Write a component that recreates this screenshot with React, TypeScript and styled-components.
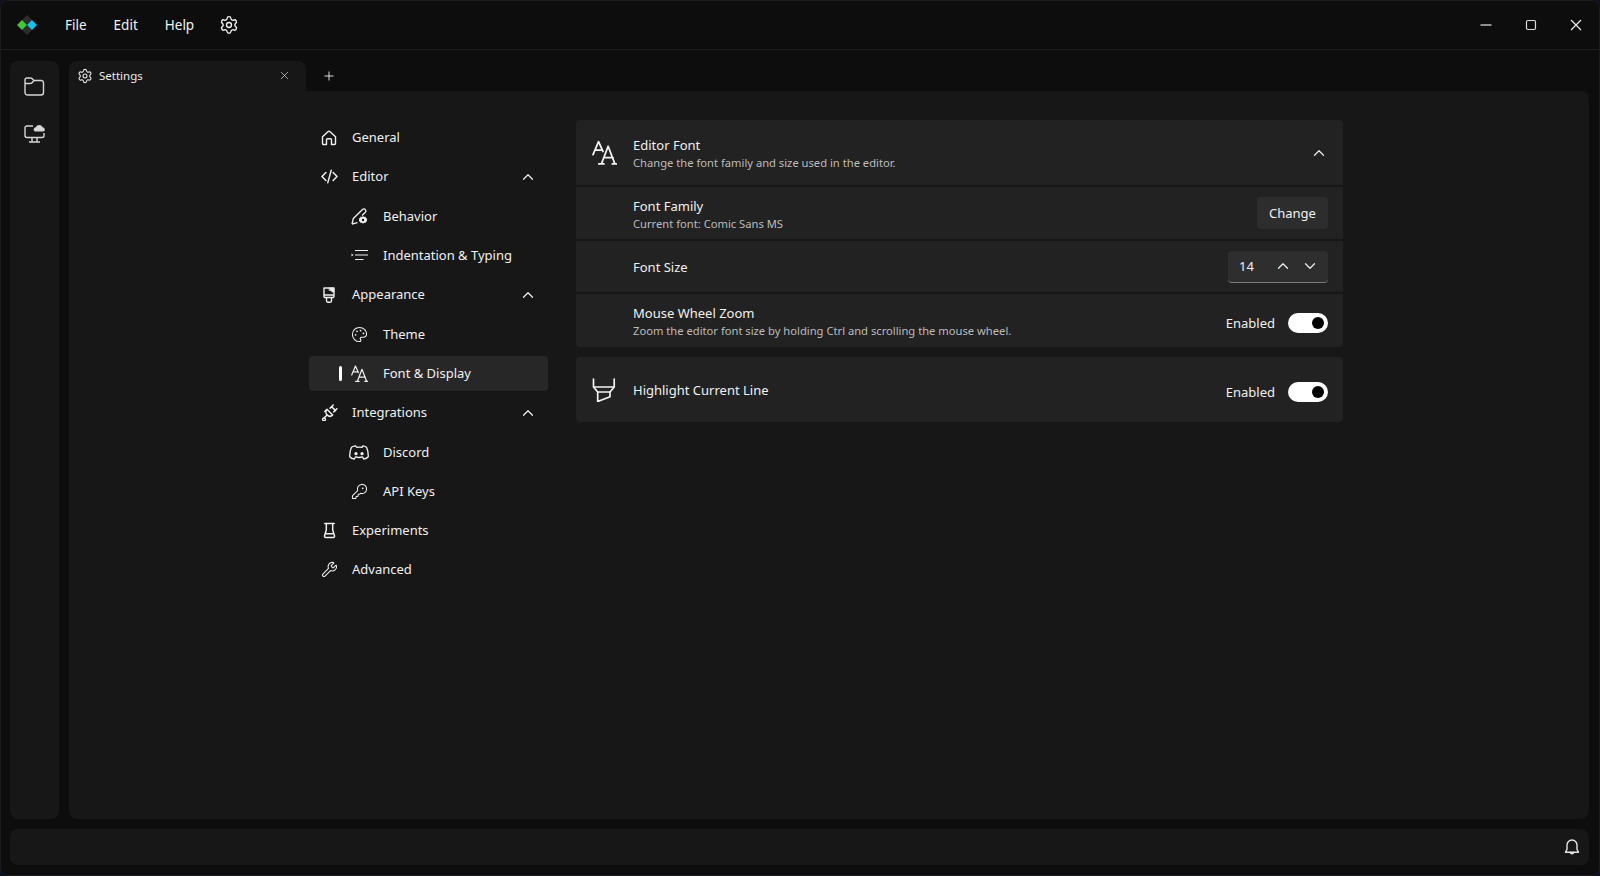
import React from 'react'
import styled, { createGlobalStyle } from 'styled-components'
import { ChevronDown, ChevronUp, KeyRound, Palette, Plus, Settings, Wrench, X } from 'lucide-react'

const GlobalStyle = createGlobalStyle`
    html, body {
        margin: 0;
        padding: 0;
        background: #0e1020;
    }
    * {
        box-sizing: border-box;
    }
    body {
        font-family: "Noto Sans", "Open Sans", sans-serif;
        color: #f0f0f0;
    }
`

type IconProps = { size?: number; width?: number }

const Line = ({ size = 20, children, width = 1.4, box = 16 }: IconProps & { children: React.ReactNode; box?: number }) => (
    <svg
        width={size}
        height={size}
        viewBox={`0 0 ${box} ${box}`}
        fill="none"
        stroke="currentColor"
        strokeWidth={width}
        strokeLinecap="round"
        strokeLinejoin="round"
    >
        {children}
    </svg>
)

const HomeIcon = () => (
    <Line size={16}>
        <path d="M1.500 6.800 6.900 1.800a1.600 1.600 0 0 1 2.200 0l5.400 5V13.500a1 1 0 0 1-1 1h-3V9.800a1 1 0 0 0-1-1h-3a1 1 0 0 0-1 1v4.700h-3a1 1 0 0 1-1-1Z" />
    </Line>
)

const CodeIcon = () => (
    <Line size={17}>
        <path d="M4.600 4.200.9 8l3.700 3.800M11.400 4.200 15.100 8l-3.700 3.800M9.600 2.200 6.400 13.800" />
    </Line>
)

const BehaviorIcon = () => (
    <svg width={17} height={17} viewBox="0 0 17 17" fill="none" stroke="currentColor" strokeWidth="1.300" strokeLinejoin="round">
        <path d="M1 16 2.300 10.500 11.500 1.500a1.900 1.900 0 0 1 3 .4 1.900 1.900 0 0 1-.3 2.600L11 7.500" />
        <path d="M1 16 6.500 14.700" />
        <path
            d="M12 8l1 .9 1.400-.3.500 1.300 1.300.6-.4 1.300.4 1.400-1.300.6-.5 1.300-1.400-.3-1 .9-1-.9-1.400.3-.5-1.300-1.300-.6.400-1.400-.4-1.300 1.300-.6.500-1.300 1.400.3Z"
            fill="currentColor"
            stroke="none"
        />
        <circle cx="12" cy="12" r="1.200" fill="#171717" stroke="none" />
    </svg>
)

const IndentIcon = () => (
    <svg width={17} height={17} viewBox="0 0 17 17" fill="none" stroke="currentColor" strokeWidth="1.200">
        <path d="M4 3.500h13M4 8h13M4 12.500h8.500" />
        <path d="M0.500 6.500 2.500 8l-2 1.500Z" fill="currentColor" stroke="none" />
    </svg>
)

const BrushIcon = () => (
    <Line size={16}>
        <path d="M3 1h10v8.500a1 1 0 0 1-1 1H4a1 1 0 0 1-1-1ZM3 8h10M5.500 10.500V14a1.500 1.500 0 0 0 1.500 1.300h2a1.500 1.500 0 0 0 1.500-1.300v-3.500" />
        <path d="M8.500 1.200h4.300v3.800h-2V3.500H8.500Z" fill="currentColor" strokeWidth={0.6} />
    </Line>
)

const FontIcon = ({ size = 17 }: IconProps) => (
    <Line size={size} box={24} width={1.700}>
        <path d="M1 14 6.300 1.500 10.500 11M3 9.800h6" />
        <path d="M9 23 15.500 6 22 23M11.200 17h9M6.500 23h5M19.500 23h4" />
    </Line>
)

const PlugIcon = () => (
    <Line size={17}>
        <path d="M5.600 5 11 10.400c-1.500 1.400-3.700 1.500-5.200 0S4.200 6.500 5.600 5Z" />
        <path d="M4.800 5.800 3.500 7.100M8.600 3.900 10 2.500l3.500 3.500-1.500 1.400" />
        <path d="M5.500 10.500 2.800 13.200M2.800 13.200a1.300 1.300 0 1 0 0.100 0ZM11.500 1l-1.500 1.500M15 4.500l-1.500 1.500" />
    </Line>
)

const DiscordIcon = () => (
    <svg width={21} height={17} viewBox="0 0 21 17" fill="none" stroke="currentColor" strokeWidth="1.400" strokeLinejoin="round">
        <path d="M6.500 1.500c-2 .3-3.400.9-4 1.700C1.200 6 .6 9 .8 13c1 1.200 2.700 2.100 4.700 2.500l1.200-2.300c2.500.7 5.100.7 7.600 0l1.200 2.300c2-.4 3.700-1.300 4.700-2.500.2-4-.4-7-1.700-9.800-.6-.8-2-1.400-4-1.700l-.8 1.600c-1.800-.3-3.500-.3-5.400 0Z" />
        <circle cx="7.300" cy="9.800" r="1.700" fill="currentColor" stroke="none" />
        <circle cx="13.700" cy="9.800" r="1.700" fill="currentColor" stroke="none" />
    </svg>
)

const FlaskIcon = () => (
    <Line size={17}>
        <path d="M3.500 1.500h9M5 1.500v6l-1.700 5.500a1.200 1.200 0 0 0 1.200 1.500h7a1.200 1.200 0 0 0 1.200-1.500L11 7.500v-6M4 11h8" />
    </Line>
)

const HighlightIcon = () => (
    <Line size={24} box={24} width={1.700}>
        <path d="M1.500 1v8l4.200 5H18l4.200-5V1M1.500 9h20.700" />
        <path d="M5.700 14v9.500L18 18.700V14" />
    </Line>
)

const FolderIcon = () => (
    <svg width={21} height={19} viewBox="0 0 21 19" fill="none" stroke="currentColor" strokeWidth="1.400" strokeLinejoin="round">
        <path d="M1 3a2 2 0 0 1 2-2h3.500c.6 0 1 .2 1.500.6l2 1.900h7.500a2.500 2.500 0 0 1 2 2.500V15.500a2.500 2.500 0 0 1-2.500 2.500H3.500A2.500 2.500 0 0 1 1 15.500Z" />
        <path d="M1 6.500h5.500c.6 0 1-.2 1.500-.7l2-2.300" />
    </svg>
)

const MonitorCloudIcon = () => (
    <svg width={21} height={20} viewBox="0 0 21 20" fill="none" stroke="currentColor" strokeWidth="1.400" strokeLinejoin="round">
        <path d="M9 3H3a2 2 0 0 0-2 2v7.500a2 2 0 0 0 2 2h15a2 2 0 0 0 2-2V10" />
        <path d="M8 14.500V19M13 14.500V19M5 19h11" />
        <path d="M11 8.500a2.200 2.200 0 0 1 .8-4.200 3.600 3.600 0 0 1 6.800 0 2.200 2.200 0 0 1 .9 4.200Z" fill="currentColor" stroke="none" />
    </svg>
)

const BellIcon = () => (
    <Line size={16}>
        <path d="M3 6a5 5 0 0 1 10 0v4.500l1.500 2.700h-13L3 10.500Z" />
        <path d="M6.500 13.200a1.500 1.500 0 0 0 3 0" />
    </Line>
)

const Logo = () => (
    <svg width={20} height={20} viewBox="0 0 20 20">
        <path d="M10 0 15 5 10 10 5 5ZM10 10 15 15 10 20 5 15Z" fill="#2c2c2c" />
        <path d="M5 5 10 10 5 15 0 10Z" fill="#45c43c" />
        <path d="M15 5 20 10 15 15 10 10Z" fill="#18bfe8" />
    </svg>
)

const WindowControl = {
    Minimize: () => (
        <svg width={12} height={12} viewBox="0 0 12 12" stroke="#bbb" strokeWidth="1.300">
            <path d="M.5 6h11" />
        </svg>
    ),
    Maximize: () => (
        <svg width={12} height={12} viewBox="0 0 12 12" fill="none" stroke="#ddd" strokeWidth="1.200">
            <rect x="1.500" y="1.500" width="9" height="9" rx="1.500" />
        </svg>
    ),
    Close: () => (
        <svg width={12} height={12} viewBox="0 0 12 12" stroke="#eee" strokeWidth="1.200">
            <path d="M1 1l10 10M11 1 1 11" />
        </svg>
    ),
}

type NavEntry = {
    label: string
    icon: React.ReactNode
    sub?: boolean
    open?: boolean
    active?: boolean
}

const navEntries: NavEntry[] = [
    { label: 'General', icon: <HomeIcon /> },
    { label: 'Editor', icon: <CodeIcon />, open: true },
    { label: 'Behavior', icon: <BehaviorIcon />, sub: true },
    { label: 'Indentation & Typing', icon: <IndentIcon />, sub: true },
    { label: 'Appearance', icon: <BrushIcon />, open: true },
    { label: 'Theme', icon: <Palette size={17} strokeWidth={1.5} />, sub: true },
    { label: 'Font & Display', icon: <FontIcon />, sub: true, active: true },
    { label: 'Integrations', icon: <PlugIcon />, open: true },
    { label: 'Discord', icon: <DiscordIcon />, sub: true },
    { label: 'API Keys', icon: <KeyRound size={17} strokeWidth={1.5} />, sub: true },
    { label: 'Experiments', icon: <FlaskIcon /> },
    { label: 'Advanced', icon: <Wrench size={17} strokeWidth={1.5} /> },
]

export default function App(): React.JSX.Element {
    return (
        <>
            <GlobalStyle />
            <AppWindow>
                <TitleBar>
                    <LogoSlot>
                        <Logo />
                    </LogoSlot>
                    <Menu>
                        <MenuItem>File</MenuItem>
                        <MenuItem>Edit</MenuItem>
                        <MenuItem>Help</MenuItem>
                        <MenuGear>
                            <Settings size={20} strokeWidth={1.6} />
                        </MenuGear>
                    </Menu>
                    <WindowControls>
                        <WindowControl.Minimize />
                        <WindowControl.Maximize />
                        <WindowControl.Close />
                    </WindowControls>
                </TitleBar>
                <Workspace>
                    <ActivityBar>
                        <ActivityButton>
                            <FolderIcon />
                        </ActivityButton>
                        <ActivityButton>
                            <MonitorCloudIcon />
                        </ActivityButton>
                    </ActivityBar>
                    <EditorArea>
                        <TabStrip>
                            <Tab>
                                <Settings size={16} strokeWidth={1.6} />
                                <TabLabel>Settings</TabLabel>
                                <X size={13} strokeWidth={1.4} color="#ccc" />
                            </Tab>
                            <NewTab>
                                <Plus size={14} strokeWidth={1.6} />
                            </NewTab>
                        </TabStrip>
                        <Panel>
                            <Nav>
                                {navEntries.map(entry => (
                                    <NavItem key={entry.label} $sub={entry.sub} $active={entry.active}>
                                        {entry.active && <ActiveMarker />}
                                        <NavIcon $sub={entry.sub}>{entry.icon}</NavIcon>
                                        <NavLabel>{entry.label}</NavLabel>
                                        {entry.open && (
                                            <NavChevron>
                                                <ChevronUp size={18} strokeWidth={1.6} />
                                            </NavChevron>
                                        )}
                                    </NavItem>
                                ))}
                            </Nav>
                            <Cards>
                                <Card>
                                    <HeaderRow>
                                        <CardIcon>
                                            <FontIcon size={25} />
                                        </CardIcon>
                                        <RowText>
                                            <RowTitle>Editor Font</RowTitle>
                                            <RowHint>Change the font family and size used in the editor.</RowHint>
                                        </RowText>
                                        <HeaderChevron>
                                            <ChevronUp size={18} strokeWidth={1.6} />
                                        </HeaderChevron>
                                    </HeaderRow>
                                    <Row $height={52}>
                                        <RowText>
                                            <RowTitle>Font Family</RowTitle>
                                            <RowHint>Current font: Comic Sans MS</RowHint>
                                        </RowText>
                                        <ChangeButton>Change</ChangeButton>
                                    </Row>
                                    <Row $height={51}>
                                        <RowText>
                                            <RowTitle>Font Size</RowTitle>
                                        </RowText>
                                        <Spinner>
                                            <SpinnerValue>14</SpinnerValue>
                                            <ChevronUp size={18} strokeWidth={1.6} />
                                            <ChevronDown size={18} strokeWidth={1.6} />
                                        </Spinner>
                                    </Row>
                                    <Row $height={53}>
                                        <RowText>
                                            <RowTitle>Mouse Wheel Zoom</RowTitle>
                                            <RowHint>
                                                Zoom the editor font size by holding Ctrl and scrolling the mouse wheel.
                                            </RowHint>
                                        </RowText>
                                        <ToggleField>
                                            <ToggleLabel>Enabled</ToggleLabel>
                                            <Toggle />
                                        </ToggleField>
                                    </Row>
                                </Card>
                                <Card>
                                    <HeaderRow $height={65}>
                                        <CardIcon>
                                            <HighlightIcon />
                                        </CardIcon>
                                        <RowText>
                                            <RowTitle>Highlight Current Line</RowTitle>
                                        </RowText>
                                        <ToggleField>
                                            <ToggleLabel>Enabled</ToggleLabel>
                                            <Toggle />
                                        </ToggleField>
                                    </HeaderRow>
                                </Card>
                            </Cards>
                        </Panel>
                    </EditorArea>
                </Workspace>
                <StatusBar>
                    <BellIcon />
                </StatusBar>
            </AppWindow>
        </>
    )
}

const AppWindow = styled.div`
    display: flex;
    flex-direction: column;
    width: 1600px;
    height: 876px;
    overflow: hidden;
    background: #0d0d0d;
    border-radius: 8px;
    border: 1px solid #1b1b1f;
`

const TitleBar = styled.header`
    display: flex;
    align-items: center;
    flex: 0 0 49px;
    padding: 0 17px 0 16px;
    border-bottom: 1px solid #1d1d1d;
`

const LogoSlot = styled.div`
    display: flex;
    width: 48px;
`

const Menu = styled.nav`
    display: flex;
    align-items: center;
    gap: 27px;
    flex: 1;
    color: #f2f2f2;
`

const MenuItem = styled.span`
    font-size: 13.500px;
`

const MenuGear = styled.span`
    display: flex;
    margin-left: -2px;
`

const WindowControls = styled.div`
    display: flex;
    align-items: center;
    gap: 33px;
`

const Workspace = styled.main`
    display: grid;
    grid-template-columns: 49px 1fr;
    gap: 10px;
    flex: 1;
    min-height: 0;
    padding: 11px 10px 0 9px;
`

const ActivityBar = styled.aside`
    display: flex;
    flex-direction: column;
    align-items: center;
    gap: 23px;
    padding-top: 13px;
    background: #171717;
    border-radius: 8px;
    color: #d6d6d6;
`

const ActivityButton = styled.div`
    display: flex;
    align-items: center;
    justify-content: center;
    height: 24px;
`

const EditorArea = styled.section`
    display: flex;
    flex-direction: column;
    min-width: 0;
`

const TabStrip = styled.div`
    display: flex;
    flex: 0 0 30px;
`

const Tab = styled.div`
    display: flex;
    align-items: center;
    gap: 6px;
    width: 237px;
    height: 29px;
    padding: 0 15px 0 8px;
    background: #171717;
    border-radius: 8px 8px 0 0;
    color: #ececec;
    box-shadow: 0 1px 0 #171717;
`

const TabLabel = styled.span`
    flex: 1;
    font-size: 11.500px;
`

const NewTab = styled.div`
    display: flex;
    align-items: center;
    height: 29px;
    padding-left: 16px;
    color: #e8e8e8;
`

const Panel = styled.div`
    display: grid;
    grid-template-columns: 239px 767px;
    gap: 28px;
    align-items: start;
    flex: 1;
    padding: 29px 0 0 240px;
    background: #171717;
    border-radius: 0 8px 8px 8px;
`

const Nav = styled.nav`
    display: flex;
    flex-direction: column;
    gap: 4px;
`

const NavItem = styled.div<{ $sub?: boolean; $active?: boolean }>`
    position: relative;
    display: flex;
    align-items: center;
    height: 35.3px;
    padding-left: ${props => (props.$sub ? '40px' : '10px')};
    background: ${props => (props.$active ? '#272727' : 'transparent')};
    border-radius: 4px;
`

const ActiveMarker = styled.span`
    position: absolute;
    left: 30px;
    top: 10px;
    width: 3px;
    height: 15px;
    background: #fff;
    border-radius: 2px;
`

const NavIcon = styled.span<{ $sub?: boolean }>`
    display: flex;
    align-items: center;
    justify-content: center;
    width: 20px;
    margin-right: ${props => (props.$sub ? '14px' : '13px')};
    color: #f0f0f0;
`

const NavLabel = styled.span`
    flex: 1;
    margin-top: -1px;
    font-size: 13px;
    color: #f0f0f0;
`

const NavChevron = styled.span`
    display: flex;
    margin-right: 11px;
    color: #f0f0f0;
`

const Cards = styled.div`
    display: flex;
    flex-direction: column;
    gap: 10px;
`

const Card = styled.div`
    display: flex;
    flex-direction: column;
    gap: 2px;
    border-radius: 4px;
    overflow: hidden;
`

const Row = styled.div<{ $height?: number }>`
    display: flex;
    align-items: center;
    height: ${props => props.$height ?? 53}px;
    padding: 0 15px 0 57px;
    background: #222222;
`

const HeaderRow = styled(Row)`
    height: ${props => props.$height ?? 65}px;
    padding-left: 16px;
`

const CardIcon = styled.span`
    display: flex;
    align-items: center;
    width: 41px;
    color: #f4f4f4;
`

const RowText = styled.div`
    display: flex;
    flex-direction: column;
    flex: 1;
    padding-top: 2px;
`

const RowTitle = styled.span`
    font-size: 13px;
    line-height: 19px;
    color: #f0f0f0;
`

const RowHint = styled.span`
    font-size: 11.200px;
    line-height: 16px;
    color: #bcbcbc;
`

const HeaderChevron = styled.span`
    display: flex;
    color: #f0f0f0;
`

const ChangeButton = styled.button`
    width: 71px;
    height: 32px;
    padding: 0;
    border: 0;
    border-radius: 4px;
    background: #2d2d2d;
    font-family: inherit;
    font-size: 13px;
    color: #f0f0f0;
`

const Spinner = styled.div`
    display: flex;
    align-items: center;
    gap: 9px;
    width: 100px;
    height: 32px;
    padding: 0 9px 0 11px;
    background: #2e2e2e;
    border-radius: 4px;
    border-bottom: 1px solid #7a7a7a;
    color: #f0f0f0;
`

const SpinnerValue = styled.span`
    flex: 1;
    font-size: 13px;
`

const ToggleField = styled.div`
    display: flex;
    align-items: center;
    gap: 13px;
    margin-top: 4px;
`

const ToggleLabel = styled.span`
    font-size: 13px;
    color: #f0f0f0;
`

const Toggle = styled.span`
    position: relative;
    width: 40px;
    height: 20px;
    background: #fff;
    border-radius: 10px;

    &::after {
        content: '';
        position: absolute;
        right: 4px;
        top: 4px;
        width: 12px;
        height: 12px;
        background: #000;
        border-radius: 50%;
    }
`

const StatusBar = styled.footer`
    display: flex;
    align-items: center;
    justify-content: flex-end;
    flex: 0 0 36px;
    margin: 10px 10px 10px 9px;
    padding-right: 9px;
    background: #171717;
    border-radius: 8px;
    color: #e4e4e4;
`
